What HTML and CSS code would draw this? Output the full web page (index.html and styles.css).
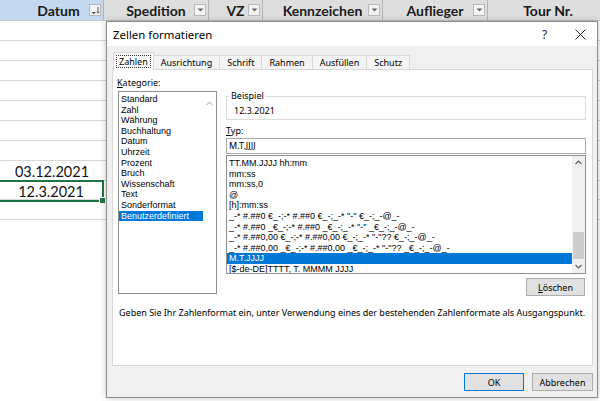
FILE: index.html
```html
<!DOCTYPE html>
<html lang="de">
<head>
<meta charset="utf-8">
<title>Zellen formatieren</title>
<link rel="stylesheet" href="styles.css">
</head>
<body>
<div class="sheet">
  <div class="hdr">
    <div class="hc c-datum sel"><span class="ht">Datum</span><span class="fb"><svg width="9" height="9" viewBox="0 0 9 9"><path d="M1 6.5h3.5M2 7.5h1.5" stroke="#555" stroke-width="1"/><path d="M1.5 6l1.25 1.5L4 6z" fill="#555"/><path d="M7 1v6M5.8 5.8L7 7.2 8.2 5.8" stroke="#555" fill="none" stroke-width="1"/></svg></span></div>
    <div class="hc c-sped"><span class="ht">Spedition</span><span class="fb"><svg width="7" height="4" viewBox="0 0 7 4"><path d="M0.5 0.5h6L3.5 3.5z" fill="#666"/></svg></span></div>
    <div class="hc c-vz"><span class="ht">VZ</span><span class="fb"><svg width="7" height="4" viewBox="0 0 7 4"><path d="M0.5 0.5h6L3.5 3.5z" fill="#666"/></svg></span></div>
    <div class="hc c-kenn"><span class="ht">Kennzeichen</span><span class="fb"><svg width="7" height="4" viewBox="0 0 7 4"><path d="M0.5 0.5h6L3.5 3.5z" fill="#666"/></svg></span></div>
    <div class="hc c-aufl"><span class="ht">Auflieger</span><span class="fb"><svg width="7" height="4" viewBox="0 0 7 4"><path d="M0.5 0.5h6L3.5 3.5z" fill="#666"/></svg></span></div>
    <div class="hc c-tour"><span class="ht">Tour Nr.</span></div>
  </div>
  <div class="row"></div>
  <div class="row"></div>
  <div class="row"></div>
  <div class="row"></div>
  <div class="row"></div>
  <div class="row"></div>
  <div class="row"></div>
  <div class="row"><div class="cell">03.12.2021</div></div>
  <div class="row"><div class="cell active">12.3.2021</div></div>
  <div class="row"></div>
</div>

<div class="dlg">
  <div class="titlebar">
    <span class="title">Zellen formatieren</span>
    <span class="tbtn help">?</span>
    <span class="tbtn close"><svg width="11" height="11" viewBox="0 0 11 11"><path d="M0.5 0.5l10 10M10.5 0.5l-10 10" stroke="#222" stroke-width="1"/></svg></span>
  </div>
  <div class="dbody">
    <div class="tabs">
      <span class="tab on"><span class="focus">Zahlen</span></span>
      <span class="tab">Ausrichtung</span>
      <span class="tab">Schrift</span>
      <span class="tab">Rahmen</span>
      <span class="tab">Ausfüllen</span>
      <span class="tab">Schutz</span>
    </div>
    <div class="panel">
      <div class="main">
        <div class="left">
          <div class="lbl"><u>K</u>ategorie:</div>
          <div class="catlist">
            <ul class="items">
              <li>Standard</li>
              <li>Zahl</li>
              <li>Währung</li>
              <li>Buchhaltung</li>
              <li>Datum</li>
              <li>Uhrzeit</li>
              <li>Prozent</li>
              <li>Bruch</li>
              <li>Wissenschaft</li>
              <li>Text</li>
              <li>Sonderformat</li>
              <li class="hl">Benutzerdefiniert</li>
            </ul>
            <div class="vscroll dis">
              <svg class="arr" width="7" height="5" viewBox="0 0 7 5"><path d="M0.5 4L3.5 1 6.5 4" stroke="#c4c4c4" fill="none" stroke-width="1.2"/></svg>
            </div>
          </div>
        </div>
        <div class="right">
          <fieldset class="group">
            <legend>Beispiel</legend>
            <div class="sample">12.3.2021</div>
          </fieldset>
          <div class="lbl typ"><u>T</u>yp:</div>
          <div class="input">M.T.JJJJ</div>
          <div class="typelist">
            <ul class="items">
              <li>TT.MM.JJJJ hh:mm</li>
              <li>mm:ss</li>
              <li>mm:ss,0</li>
              <li>@</li>
              <li>[h]:mm:ss</li>
              <li>_-* #.##0 €_-;-* #.##0 €_-;_-* "-" €_-;_-@_-</li>
              <li>_-* #.##0 _€_-;-* #.##0 _€_-;_-* "-" _€_-;_-@_-</li>
              <li>_-* #.##0,00 €_-;-* #.##0,00 €_-;_-* "-"?? €_-;_-@_-</li>
              <li>_-* #.##0,00 _€_-;-* #.##0,00 _€_-;_-* "-"?? _€_-;_-@_-</li>
              <li class="hl">M.T.JJJJ</li>
              <li>[$-de-DE]TTTT, T. MMMM JJJJ</li>
            </ul>
            <div class="vscroll">
              <svg class="arr" width="7" height="5" viewBox="0 0 7 5"><path d="M0.5 4L3.5 1 6.5 4" stroke="#606060" fill="none" stroke-width="1.2"/></svg>
              <div class="track"><div class="thumb"></div></div>
              <svg class="arr" width="7" height="5" viewBox="0 0 7 5"><path d="M0.5 1L3.5 4 6.5 1" stroke="#606060" fill="none" stroke-width="1.2"/></svg>
            </div>
          </div>
          <div class="delrow"><span class="btn"><u>L</u>öschen</span></div>
        </div>
      </div>
      <p class="hint">Geben Sie Ihr Zahlenformat ein, unter Verwendung eines der bestehenden Zahlenformate als Ausgangspunkt.</p>
    </div>
    <div class="btnrow">
      <span class="btn ok">OK</span>
      <span class="btn cancel">Abbrechen</span>
    </div>
  </div>
</div>
</body>
</html>
```

FILE: styles.css
```css
* { box-sizing: border-box; }
html, body { margin: 0; padding: 0; }
body {
  width: 600px;
  height: 401px;
  overflow: hidden;
  background: #fff;
  position: relative;
  font-family: Lato, "Liberation Sans", sans-serif;
}

/* ---------- spreadsheet ---------- */
.sheet { width: 600px; }
.hdr {
  display: flex;
  height: 21px;
  background: #dedede;
  border-bottom: 1px solid #c8c8c8;
}
.hc {
  position: relative;
  flex: none;
  height: 20px;
  display: flex;
  align-items: center;
  justify-content: center;
  border-right: 1px solid #b4b4b4;
  font-weight: 700;
  font-size: 14px;
  color: #1a1a1a;
}
.hc.sel { background: #c4d9ef; padding-left: 14px; }
.c-datum { width: 104px; }
.c-sped { width: 105px; }
.c-vz { width: 54px; }
.c-kenn { width: 120px; }
.c-aufl { width: 105px; }
.c-tour { width: 142px; padding-right: 22px; border-right: none; }
.fb {
  position: absolute;
  right: 2px;
  top: 4px;
  width: 12px;
  height: 12px;
  background: #f4f4f4;
  border: 1px solid #b8b8b8;
  display: flex;
  align-items: center;
  justify-content: center;
}
.row {
  height: 20px;
  border-bottom: 1px solid #d6d6d6;
}
.cell {
  position: relative;
  width: 104px;
  height: 20px;
  display: flex;
  align-items: center;
  justify-content: center;
  font-size: 14.5px;
  color: #111;
}
.cell.active {
  height: 22px;
  margin-top: -1px;
  border: 2px solid #217346;
  border-left: none;
}
.cell.active::after {
  content: "";
  position: absolute;
  right: -4px;
  bottom: -4px;
  width: 5px;
  height: 5px;
  background: #217346;
  border: 1px solid #fff;
}

/* ---------- dialog ---------- */
.dlg {
  position: absolute;
  left: 106px;
  top: 21px;
  width: 492px;
  height: 377px;
  border: 1px solid #8c8c8c;
  background: #f0f0f0;
  box-shadow: 0 0 6px rgba(0,0,0,0.25);
  display: flex;
  flex-direction: column;
  font-family: "Noto Sans", "Open Sans", sans-serif;
  font-size: 9px;
  color: #000;
}
.titlebar {
  height: 24px;
  background: #fff;
  display: flex;
  align-items: center;
  flex: none;
}
.title { flex: 1; padding-left: 6px; font-size: 11.4px; }
.tbtn {
  height: 24px;
  display: flex;
  align-items: center;
  justify-content: center;
}
.help { width: 37px; font-size: 12px; color: #222; }
.close { width: 34px; }

.dbody { flex: 1; display: flex; flex-direction: column; padding: 6px 4px 0 5px; }
.tabs { display: flex; align-items: flex-end; height: 17px; padding-left: 1px; }
.tab {
  height: 14px;
  padding: 0 7px;
  border: 1px solid #d9d9d9;
  border-bottom: none;
  margin-right: -1px;
  background: #f4f4f4;
  display: flex;
  align-items: center;
  line-height: 12px;
}
.tab.on {
  background: #fff;
  padding: 0 2px;
  position: relative;
  z-index: 1;
  margin-bottom: -1px;
  height: 18px;
}
.focus { border: 1px dotted #333; padding: 0 2px; line-height: 11px; }

.panel {
  height: 297px;
  background: #fff;
  border: 1px solid #d9d9d9;
  padding: 7px 6px 0 4px;
  display: flex;
  flex-direction: column;
}
.main { display: flex; gap: 9px; }
.left { width: 100px; flex: none; }
.lbl { line-height: 12px; height: 12px; margin-bottom: 2px; }
.right { flex: 1; padding-top: 13px; }
u { text-decoration: underline; text-underline-offset: 1px; }

.items {
  list-style: none;
  margin: 0;
  padding: 0;
  flex: 1;
  min-width: 0;
  overflow: hidden;
  font-family: "Liberation Sans", Arial, sans-serif;
  font-size: 9px;
}
.items li { line-height: 10.6px; white-space: nowrap; padding-left: 2px; }
.items li.hl { background: #0078d7; color: #fff; }

.catlist {
  height: 203px;
  border: 1px solid #8f8f8f;
  display: flex;
  padding-top: 1px;
  margin-left: 1px;
}
.catlist .items { padding-top: 1px; }
.vscroll {
  width: 13px;
  flex: none;
  display: flex;
  flex-direction: column;
  align-items: center;
}
.vscroll.dis { padding-top: 4px; }
.arr { flex: none; margin: 4px 0; }

.group {
  margin: 0;
  padding: 3px 7px 2px;
  border: 1px solid #dcdcdc;
  min-width: 0;
}
.group legend { padding: 0 2px; margin-left: -5px; line-height: 12px; }
.sample { line-height: 12px; }
.typ { margin-top: 5px; margin-bottom: 1px; }
.input {
  height: 16px;
  border: 1px solid #a8a8a8;
  padding-left: 2px;
  line-height: 14px;
}
.typelist {
  height: 119px;
  margin-top: 1px;
  border: 1px solid #8f8f8f;
  display: flex;
}
.typelist .items { padding-top: 2px; }
.typelist .vscroll { background: #f0f0f0; width: 13px; }
.track { flex: 1; width: 100%; display: flex; flex-direction: column; justify-content: flex-end; padding: 0 1px 1px; }
.thumb { height: 27px; background: #cdcdcd; }

.delrow { display: flex; justify-content: flex-end; margin-top: 4px; padding-right: 1px; }
.btn {
  height: 18px;
  border: 1px solid #adadad;
  background: #e1e1e1;
  display: flex;
  align-items: center;
  justify-content: center;
}
.delrow .btn { width: 59px; }
.hint { margin: 11px 0 0 2px; line-height: 12px; white-space: nowrap; }

.btnrow { display: flex; justify-content: flex-end; gap: 8px; margin-top: 7px; padding-right: 0; }
.btn.ok { width: 60px; border: 1px solid #0078d7; }
.btn.cancel { width: 61px; }
```
